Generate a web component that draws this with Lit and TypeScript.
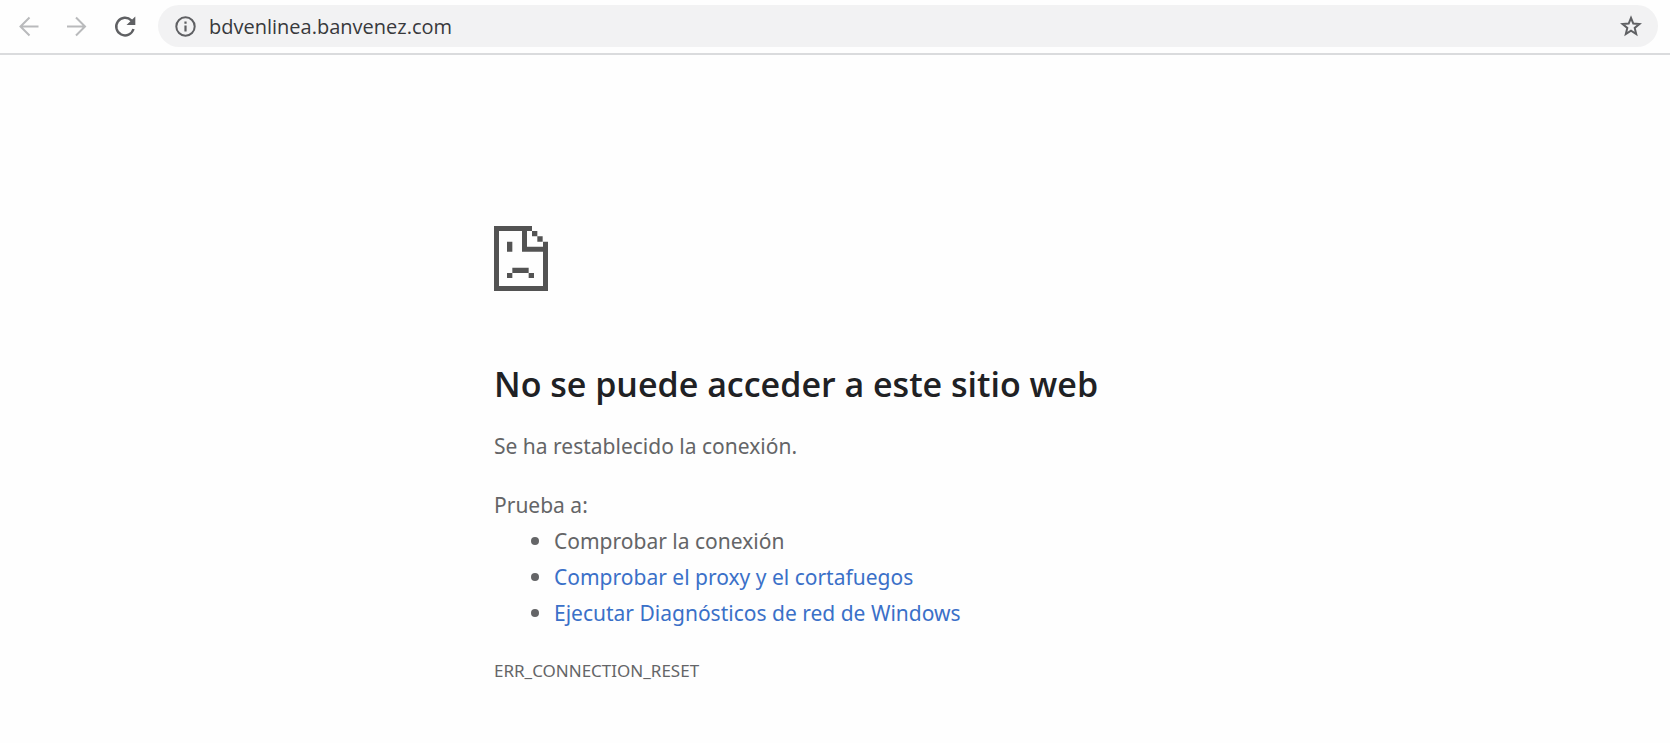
import { LitElement, html, css } from "lit";
import { customElement } from "lit/decorators.js";

@customElement("browser-toolbar")
class BrowserToolbar extends LitElement {
  static styles = css`
    :host {
      display: block;
    }
    .bar {
      display: flex;
      align-items: center;
      gap: 16px;
      padding: 5px 12px 6px;
      border-bottom: 2px solid #dadbdd;
    }
    button {
      display: grid;
      place-items: center;
      width: 32px;
      height: 32px;
      padding: 0;
      border: 0;
      background: none;
      color: #5f6063;
    }
    button:disabled {
      color: #b9babc;
    }
    .address {
      flex: 1;
      display: flex;
      align-items: center;
      gap: 8px;
      height: 42px;
      margin-left: 2px;
      padding: 0 11px;
      border-radius: 21px;
      background: #f2f2f3;
    }
    input {
      flex: 1;
      min-width: 0;
      padding: 2px 0 0;
      border: 0;
      outline: 0;
      background: none;
      color: #38393c;
      font: 20px/28px "Open Sans", "Noto Sans", sans-serif;
    }
    svg {
      display: block;
      fill: none;
      stroke: currentColor;
      stroke-width: 2;
    }
    .solid {
      fill: currentColor;
      stroke: none;
    }
  `;

  render() {
    return html`
      <nav class="bar" aria-label="Navegación">
        <button disabled aria-label="Atrás">
          <svg width="24" height="24" viewBox="0 0 24 24">
            <path d="M22.500 12.500H5M13.500 3.500L4.500 12.500L13.500 21.500" />
          </svg>
        </button>
        <button disabled aria-label="Adelante">
          <svg width="24" height="24" viewBox="0 0 24 24">
            <path d="M3 12.500H20.500M12 3.500L21 12.500L12 21.500" />
          </svg>
        </button>
        <button aria-label="Volver a cargar">
          <svg width="24" height="24" viewBox="0 0 24 24">
            <path stroke-width="2.400" d="M21.500 15A8.800 8.800 0 1 1 19.300 6.400L21 8.100" />
            <path class="solid" d="M23.300 2.500V11H14.500Z" />
          </svg>
        </button>
        <div class="address">
          <button aria-label="Información del sitio">
            <svg width="24" height="24" viewBox="0 0 24 24">
              <circle cx="12.500" cy="12.500" r="9.200" />
              <path class="solid" d="M11.400 11.500h2.200v6h-2.200zM11.400 7.500h2.200v2.200h-2.200z" />
            </svg>
          </button>
          <input type="text" aria-label="Dirección" value="bdvenlinea.banvenez.com" spellcheck="false" />
          <button aria-label="Añadir a marcadores">
            <svg width="24" height="24" viewBox="0 0 24 24">
              <path
                d="M12 4L14.300 9.600L20.400 10L15.700 13.900L17.200 20L12 16.700L6.800 20L8.300 13.900L3.600 10L9.700 9.600Z"
              />
            </svg>
          </button>
        </div>
      </nav>
    `;
  }
}

@customElement("error-page")
class ErrorPage extends LitElement {
  static styles = css`
    :host {
      display: block;
    }
    main {
      box-sizing: border-box;
      max-width: 682px;
      margin: 0 auto;
      padding-top: 171px;
      color: #646567;
      font: 21px/36px "Noto Sans", "Open Sans", sans-serif;
    }
    .sad {
      display: block;
      fill: #535353;
    }
    h1 {
      margin: 66px 0 17px;
      color: #202124;
      font: 600 34px/54px "Open Sans", "Noto Sans", sans-serif;
    }
    p {
      margin: 0;
    }
    .hint {
      margin-top: 23px;
    }
    ul {
      margin: 0;
      padding-left: 60px;
      line-height: 35px;
    }
    li::marker {
      font-size: 22px;
    }
    a {
      color: #3a70c8;
      text-decoration: none;
    }
    .code {
      margin-top: 22px;
      font-size: 17px;
    }
  `;

  render() {
    return html`
      <main>
        <svg class="sad" width="54" height="65" viewBox="0 0 162 195" aria-hidden="true">
          <path
            d="M0 0H114V15H99V62H147V47H162V195H0ZM15 15V180H147V77H84V15Z"
            fill-rule="evenodd"
          />
          <path d="M114 15H130V31H114ZM130 31H146V47H130ZM39 47H55V77H39ZM55 125H104V141H55ZM39 141H55V156H39ZM104 141H120V156H104Z" />
        </svg>
        <h1>No se puede acceder a este sitio web</h1>
        <p>Se ha restablecido la conexión.</p>
        <p class="hint">Prueba a:</p>
        <ul>
          <li>Comprobar la conexión</li>
          <li><a href="#proxy">Comprobar el proxy y el cortafuegos</a></li>
          <li><a href="#diagnosticos">Ejecutar Diagnósticos de red de Windows</a></li>
        </ul>
        <p class="code">ERR_CONNECTION_RESET</p>
      </main>
    `;
  }
}

@customElement("app-root")
class AppRoot extends LitElement {
  static styles = css`
    :host {
      display: block;
      min-height: 100vh;
      background: #fefefe;
    }
  `;

  render() {
    return html`
      <browser-toolbar></browser-toolbar>
      <error-page></error-page>
    `;
  }
}
